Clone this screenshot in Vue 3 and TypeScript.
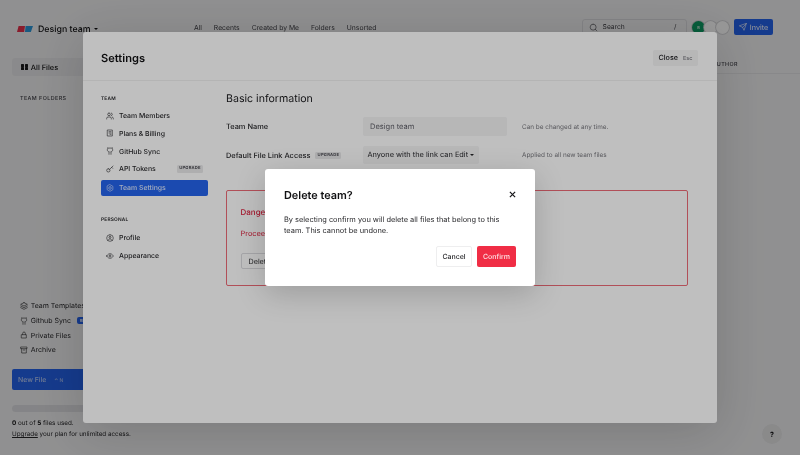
<script setup lang="ts">
const icons: Record<string, string> = {
  users: 'M16 21v-2a4 4 0 0 0-4-4H6a4 4 0 0 0-4 4v2M9 3a4 4 0 1 0 0 8a4 4 0 0 0 0-8M22 21v-2a4 4 0 0 0-3-3.87M16 3.13a4 4 0 0 1 0 7.75',
  receipt: 'M5 3h14v18H5zM9 8h6M9 12h6M12 16h3',
  github: 'M15 22v-4a4.8 4.8 0 0 0-1-3.5c3 0 6-2 6-5.5.08-1.25-.27-2.48-1-3.5.28-1.15.28-2.35 0-3.5 0 0-1 0-3 1.5-2.64-.5-5.36-.5-8 0C6 2 5 2 5 2c-.3 1.15-.3 2.35 0 3.5A5.403 5.403 0 0 0 4 9c0 3.5 3 5.5 6 5.5-.39.49-.68 1.05-.85 1.65-.17.6-.22 1.23-.15 1.85v4',
  key: 'M7 11a5 5 0 1 0 0 10a5 5 0 0 0 0-10M11 13 21 3M17 7l3 3',
  gear: 'M12 2l8.66 5v10L12 22l-8.66-5V7zM12 8a4 4 0 1 0 0 8a4 4 0 0 0 0-8',
  profile: 'M12 2a10 10 0 1 0 0 20a10 10 0 0 0 0-20M12 7a3 3 0 1 0 0 6a3 3 0 0 0 0-6M6 19c1-3 3.5-4 6-4s5 1 6 4',
  eye: 'M2 12s3.5-7 10-7 10 7 10 7-3.5 7-10 7-10-7-10-7zM12 9a3 3 0 1 0 0 6a3 3 0 0 0 0-6',
  layers: 'M12 2 2 7l10 5 10-5-10-5zM2 12l10 5 10-5M2 17l10 5 10-5',
  lock: 'M5 11h14v10H5zM8 11V7a4 4 0 0 1 8 0v4',
  archive: 'M3 3h18v5H3zM5 8v13h14V8M10 12h4',
  search: 'M11 3a8 8 0 1 0 0 16a8 8 0 0 0 0-16M21 21l-4.3-4.3',
  send: 'M22 2 11 13M22 2l-7 20-4-9-9-4z',
  close: 'M5 5l14 14M19 5 5 19',
}

const topLinks: string[] = ['All', 'Recents', 'Created by Me', 'Folders', 'Unsorted']

const sideLinks = [
  { label: 'Team Templates', icon: 'layers' },
  { label: 'Github Sync', icon: 'github', badge: 'BETA' },
  { label: 'Private Files', icon: 'lock' },
  { label: 'Archive', icon: 'archive' },
]

const teamNav = [
  { label: 'Team Members', icon: 'users' },
  { label: 'Plans & Billing', icon: 'receipt' },
  { label: 'GitHub Sync', icon: 'github' },
  { label: 'API Tokens', icon: 'key', badge: 'UPGRADE' },
  { label: 'Team Settings', icon: 'gear', active: true },
]

const personalNav = [
  { label: 'Profile', icon: 'profile' },
  { label: 'Appearance', icon: 'eye' },
]
</script>

<template>
  <div class="app">
    <header class="topbar">
      <div class="brand">
        <svg class="logo" viewBox="0 0 16 6" aria-hidden="true">
          <polygon points="1.6,0 8,0 7.2,6 0,6" fill="#e5304a" />
          <polygon points="8.6,0 16,0 13.8,6 8,6" fill="#2b96d8" />
        </svg>
        <span class="team">Design team</span>
        <span class="caret"></span>
      </div>
      <nav class="top-links">
        <a v-for="link in topLinks" :key="link">{{ link }}</a>
      </nav>
      <div class="search">
        <svg class="ico search-ico" viewBox="0 0 24 24"><path :d="icons.search" /></svg>
        <span class="search-text">Search</span>
        <span>/</span>
      </div>
      <div class="avatars">
        <span class="avatar green">B</span>
        <span class="avatar"></span>
        <span class="avatar"></span>
      </div>
      <button class="invite">
        <svg class="ico" viewBox="0 0 24 24"><path :d="icons.send" /></svg>
        Invite
      </button>
    </header>

    <div class="page">
      <aside class="sidebar">
        <div class="all-files">
          <span class="grid-ico"><i></i><i></i><i></i><i></i></span>
          All Files
        </div>
        <div class="folders">TEAM FOLDERS</div>
        <div class="side-links">
          <div v-for="link in sideLinks" :key="link.label" class="side-link">
            <svg class="ico" viewBox="0 0 24 24"><path :d="icons[link.icon]" /></svg>
            <span>{{ link.label }}</span>
            <span v-if="link.badge" class="beta">{{ link.badge }}</span>
          </div>
        </div>
        <button class="new-file">New File <span class="shortcut">⌃ N</span></button>
        <div class="progress"></div>
        <p class="usage"><b>0</b> out of <b>5</b> files used.<br /><u>Upgrade</u> your plan for unlimited access.</p>
      </aside>
      <main class="main">
        <div class="table-head"><span>AUTHOR</span></div>
      </main>
    </div>

    <button class="help">?</button>

    <div class="overlay settings-layer">
      <section class="settings">
        <header class="settings-head">
          <h1>Settings</h1>
          <button class="close-btn">Close <span>Esc</span></button>
        </header>
        <div class="settings-body">
          <nav class="settings-nav">
            <h4>TEAM</h4>
            <a v-for="item in teamNav" :key="item.label" class="nav-item" :class="{ active: item.active }">
              <svg class="ico" viewBox="0 0 24 24"><path :d="icons[item.icon]" /></svg>
              <span class="nav-label">{{ item.label }}</span>
              <span v-if="item.badge" class="upgrade">{{ item.badge }}</span>
            </a>
            <h4 class="personal">PERSONAL</h4>
            <a v-for="item in personalNav" :key="item.label" class="nav-item">
              <svg class="ico" viewBox="0 0 24 24"><path :d="icons[item.icon]" /></svg>
              <span class="nav-label">{{ item.label }}</span>
            </a>
          </nav>
          <div class="content">
            <h2>Basic information</h2>
            <div class="form-row name-row">
              <label>Team Name</label>
              <div class="field input">Design team</div>
              <span class="hint">Can be changed at any time.</span>
            </div>
            <div class="form-row access-row">
              <label>Default File Link Access <span class="upgrade">UPGRADE</span></label>
              <div class="field select">Anyone with the link can Edit <span class="caret"></span></div>
              <span class="hint">Applied to all new team files</span>
            </div>
            <div class="danger">
              <h3>Danger Zone</h3>
              <p>Proceed</p>
              <button class="delete-btn">Delete team</button>
            </div>
          </div>
        </div>
      </section>
    </div>

    <div class="overlay confirm-layer">
      <section class="dialog">
        <div class="dialog-head">
          <h2>Delete team?</h2>
          <svg class="dialog-close" viewBox="0 0 24 24"><path :d="icons.close" /></svg>
        </div>
        <p>By selecting confirm you will delete all files that belong to this team. This cannot be undone.</p>
        <div class="dialog-actions">
          <button class="cancel">Cancel</button>
          <button class="confirm">Confirm</button>
        </div>
      </section>
    </div>
  </div>
</template>

<style>
html, body { margin: 0; background: #fff; }
</style>

<style scoped>
.app {
  position: relative;
  width: 800px;
  height: 455px;
  overflow: hidden;
  display: flex;
  flex-direction: column;
  background: #f2f2f3;
  color: #111113;
  font-family: Inter, "Liberation Sans", sans-serif;
  font-size: 7.2px;
  text-rendering: geometricPrecision;
  filter: blur(.38px);
}
button { font-family: inherit; border: 0; padding: 0; text-rendering: geometricPrecision; }
h1, h2, h3, h4, p { margin: 0; }
.ico {
  width: 8px;
  height: 8px;
  flex: none;
  fill: none;
  stroke: currentColor;
  stroke-width: 1.8;
  stroke-linecap: round;
  stroke-linejoin: round;
}
.caret {
  display: inline-block;
  width: 0;
  height: 0;
  border-left: 2.2px solid transparent;
  border-right: 2.2px solid transparent;
  border-top: 2.4px solid currentColor;
  vertical-align: middle;
}

/* top bar */
.topbar {
  display: flex;
  align-items: center;
  height: 54px;
  flex: none;
  padding: 0 27px 0 17px;
  box-sizing: border-box;
}
.brand { display: flex; align-items: center; width: 177px; margin-top: 4px; }
.logo { width: 16px; height: 6px; margin-right: 5px; }
.team { font-size: 8.8px; font-weight: 500; margin-right: 3px; }
.top-links { display: flex; gap: 12px; width: 388px; color: #3f3f46; font-size: 6.8px; }
.search {
  display: flex;
  align-items: center;
  width: 105px;
  height: 16px;
  box-sizing: border-box;
  padding: 0 9px 0 6px;
  border: 0.5px solid #dcdce0;
  border-radius: 3px;
  color: #3f3f46;
  font-size: 6.7px;
}
.search-ico { width: 9px; height: 9px; margin-right: 5px; stroke-width: 1.6; }
.search-text { flex: 1; }
.avatars { display: flex; margin-left: 5.5px; }
.avatar {
  display: grid;
  place-items: center;
  width: 13px;
  height: 13px;
  border-radius: 50%;
  background: #fff;
  margin-left: -1px;
  font-size: 4px;
  box-shadow: 0 0 0 .8px #d0d0d4;
}
.avatar:first-child { margin-left: 0; }
.avatar.green { background: #0d9b63; color: #fff; }
.invite {
  display: flex;
  align-items: center;
  justify-content: center;
  gap: 3px;
  width: 39px;
  height: 16px;
  margin-left: 5px;
  border-radius: 2px;
  background: #2563eb;
  color: #fff;
  font-size: 7.2px;
}

/* page beneath the modals */
.page { flex: 1; display: flex; min-height: 0; }
.sidebar {
  width: 150px;
  flex: none;
  box-sizing: border-box;
  padding: 4px 0 15px 12px;
  display: flex;
  flex-direction: column;
}
.all-files {
  display: flex;
  align-items: center;
  gap: 3px;
  height: 18px;
  padding-left: 9px;
  border-radius: 3px;
  background: #e8e8ea;
  font-weight: 500;
  font-size: 7.4px;
}
.grid-ico { display: grid; grid-template-columns: 3px 3px; gap: .8px; }
.grid-ico i { height: 3px; background: #18181b; border-radius: .5px; }
.folders {
  margin: 20px 0 0 8px;
  font-size: 5.4px;
  letter-spacing: .42px;
  font-weight: 500;
  color: #3f3f46;
}
.side-links { margin-top: auto; padding-left: 8px; display: flex; flex-direction: column; gap: 5.7px; color: #27272a; font-size: 7px; }
.side-link { display: flex; align-items: center; gap: 2.7px; height: 9px; white-space: nowrap; }
.beta {
  margin-left: 3px;
  padding: 1px 3px;
  border-radius: 2px;
  background: #2563eb;
  color: #fff;
  font-size: 4px;
}
.new-file {
  height: 21px;
  margin-top: 14.5px;
  padding-left: 6px;
  text-align: left;
  border-radius: 2px;
  background: #2563eb;
  color: #b9cdf7;
  font-size: 6.9px;
  font-weight: 500;
}
.shortcut { margin-left: 6px; font-size: 5px; color: #a9c0f5; }
.progress { height: 7px; margin-top: 15.5px; border-radius: 4px; background: #dedee1; }
.usage { margin: 6px -40px 0 0; font-size: 6.3px; line-height: 10.8px; color: #27272a; }
.usage b { font-weight: 700; color: #111113; }
.main { flex: 1; padding-top: 3px; }
.table-head {
  height: 16px;
  display: flex;
  justify-content: flex-end;
  align-items: center;
  padding-right: 62px;
  border-bottom: .5px solid #e4e4e7;
  font-size: 5.4px;
  font-weight: 500;
  letter-spacing: .42px;
  color: #3f3f46;
}
.help {
  position: absolute;
  right: 18px;
  bottom: 11px;
  width: 20px;
  height: 20px;
  border-radius: 50%;
  background: #e6e6e8;
  color: #111113;
  font-size: 7px;
  font-weight: 700;
}

/* overlays */
.overlay {
  position: absolute;
  inset: 0;
  display: flex;
  align-items: center;
  justify-content: center;
  background: rgba(0, 0, 0, .25);
}
.settings-layer { background: rgba(0, 0, 0, .2); }

/* settings modal */
.settings {
  width: 634px;
  height: 391px;
  display: flex;
  flex-direction: column;
  border-radius: 3px;
  background: #fff;
  box-shadow: 0 8px 50px rgba(0, 0, 0, .16);
}
.settings-head {
  flex: none;
  height: 49px;
  box-sizing: border-box;
  display: flex;
  align-items: center;
  justify-content: space-between;
  padding: 3px 19px 0 18px;
  border-bottom: .5px solid #f0f0f1;
}
.settings-head h1 { font-size: 11.1px; font-weight: 600; }
.close-btn {
  width: 45px;
  height: 16px;
  border-radius: 2px;
  background: #f4f4f5;
  color: #18181b;
  font-size: 7.2px;
  font-weight: 500;
}
.close-btn span { margin-left: 3px; font-size: 5.6px; color: #77777d; }
.settings-body { flex: 1; display: flex; padding: 0 29.5px 0 18px; gap: 18px; }
.settings-nav { width: 107px; flex: none; padding-top: 14.5px; }
.settings-nav h4 { font-size: 4.8px; font-weight: 600; letter-spacing: .2px; margin-bottom: 6px; height: 6px; color: #27272a; }
.settings-nav h4.personal { margin: 21.5px 0 6.5px; }
.nav-item {
  display: flex;
  align-items: center;
  height: 16px;
  margin-top: 1.8px;
  padding: 0 5px;
  border-radius: 2px;
  color: #27272a;
  font-size: 6.9px;
  font-weight: 500;
}
.nav-item .ico { margin-right: 5px; }
.nav-label { flex: 1; }
.nav-item.active { background: #2563eb; color: #dbe6fd; margin-top: 3px; }
.upgrade {
  display: inline-block;
  padding: 1.2px 2.2px;
  border-radius: 1.5px;
  background: #e8e8ea;
  color: #3f3f46;
  font-size: 4.2px;
  font-weight: 600;
  letter-spacing: .2px;
  vertical-align: middle;
}
.content { flex: 1; min-width: 0; padding-top: 9.5px; }
.content h2 { font-size: 10.6px; font-weight: 400; color: #18181b; height: 15px; line-height: 15px; }
.form-row { display: flex; align-items: center; font-size: 7.4px; color: #27272a; font-weight: 500; }
.form-row label { width: 137px; flex: none; }
.form-row label .upgrade { margin-left: 3px; }
.name-row { margin-top: 11.5px; }
.access-row { margin-top: 10px; }
.field { border-radius: 2px; background: #f4f4f5; font-weight: 400; box-sizing: border-box; }
.input { width: 144px; height: 19px; line-height: 19px; padding-left: 7px; color: #5f5f67; font-size: 7.5px; }
.select { width: 116px; height: 18px; line-height: 18px; padding-left: 4.5px; color: #27272a; white-space: nowrap; font-size: 7.4px; }
.hint { font-size: 6.4px; font-weight: 400; color: #77777d; margin-left: 15px; }
.name-row .hint { margin-left: 15px; }
.access-row .hint { margin-left: 43px; }
.danger {
  height: 96px;
  margin-top: 26px;
  box-sizing: border-box;
  padding: 16px 13.5px;
  border: 1px solid #ec6a76;
  border-radius: 2px;
}
.danger h3 { font-size: 8px; font-weight: 500; color: #dc1f3c; }
.danger p { margin-top: 12px; font-size: 7.4px; color: #dc1f3c; }
.delete-btn {
  margin-top: 15px;
  height: 16px;
  padding: 0 7px;
  border: .5px solid #dcdce0;
  border-radius: 2px;
  background: #fff;
  font-size: 7.2px;
  color: #27272a;
}

/* confirm dialog */
.dialog {
  width: 270px;
  height: 117px;
  box-sizing: border-box;
  padding: 19px 19px 0;
  border-radius: 3px;
  background: #fff;
  box-shadow: 0 8px 30px rgba(0, 0, 0, .18);
}
.dialog-head { display: flex; align-items: center; justify-content: space-between; height: 13px; }
.dialog-head h2 { font-size: 10.9px; font-weight: 600; color: #111113; }
.dialog-close { width: 9px; height: 9px; margin-right: -.5px; fill: none; stroke: #18181b; stroke-width: 3.2; }
.dialog p { margin-top: 13px; font-size: 7.42px; line-height: 11px; color: #27272a; }
.dialog-actions { display: flex; justify-content: flex-end; gap: 5px; margin-top: 10px; }
.dialog-actions button { height: 21px; border-radius: 2px; font-size: 7px; font-weight: 500; }
.cancel { width: 36px; background: #fff; color: #27272a; border: .5px solid #eeeeef; box-sizing: border-box; }
.confirm { width: 39px; background: #f02d45; color: #fde4e7; }
</style>
